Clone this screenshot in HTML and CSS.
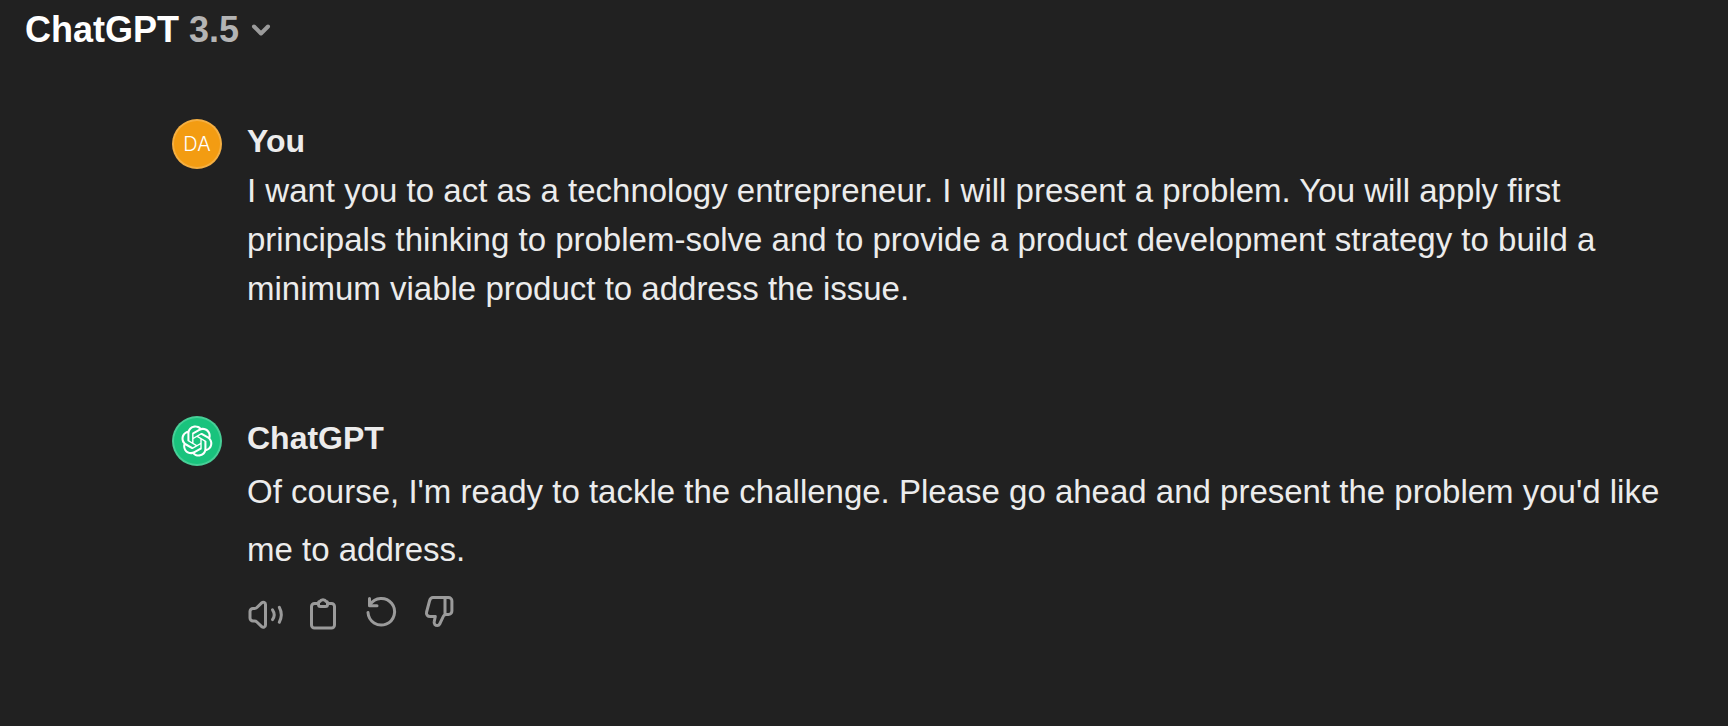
FILE: index.html
```html
<!DOCTYPE html>
<html lang="en">
<head>
  <meta charset="UTF-8" />
  <meta name="viewport" content="width=device-width, initial-scale=1.0"/>
  <title>ChatGPT</title>
  <link rel="stylesheet" href="styles.css">
</head>
<body>
  <header class="topbar">
    <button type="button" class="model-switch">
      <span>ChatGPT <span class="model-version">3.5</span></span>
      <svg class="chevron" width="20" height="20" viewBox="0 0 20 20" aria-hidden="true">
        <path d="M3 6.5l7 7 7-7"/>
      </svg>
    </button>
  </header>

  <main class="conversation">
    <article class="message">
      <div class="avatar avatar-user">DA</div>
      <div class="message-body">
        <h2 class="author">You</h2>
        <p class="text">I want you to act as a technology entrepreneur. I will present a problem. You will apply first principals thinking to problem-solve and to provide a product development strategy to build a minimum viable product to address the issue.</p>
      </div>
    </article>

    <article class="message">
      <div class="avatar avatar-gpt">
        <svg width="32" height="32" viewBox="0 0 41 41" aria-hidden="true">
          <path d="M37.5324 16.8707C37.9808 15.5241 38.1363 14.0974 37.9886 12.6859C37.8409 11.2744 37.3934 9.91076 36.676 8.68622C35.6126 6.83404 33.9882 5.3676 32.0373 4.4985C30.0864 3.62941 27.9098 3.40259 25.8215 3.85078C24.8796 2.7893 23.7219 1.94125 22.4257 1.36341C21.1295 0.785575 19.7249 0.491269 18.3058 0.500197C16.1708 0.495044 14.0893 1.16803 12.3614 2.42214C10.6335 3.67624 9.34853 5.44666 8.6917 7.47815C7.30085 7.76286 5.98686 8.3414 4.8377 9.17505C3.68854 10.0087 2.73073 11.0782 2.02839 12.312C0.956464 14.1591 0.498905 16.2988 0.721698 18.4228C0.944492 20.5467 1.83612 22.5449 3.268 24.1293C2.81966 25.4759 2.66413 26.9026 2.81182 28.3141C2.95951 29.7256 3.40701 31.0892 4.12437 32.3138C5.18791 34.1659 6.8123 35.6322 8.76321 36.5013C10.7141 37.3704 12.8907 37.5973 14.9789 37.1492C15.9208 38.2107 17.0786 39.0587 18.3747 39.6366C19.6709 40.2144 21.0755 40.5087 22.4946 40.4998C24.6307 40.5054 26.7133 39.8321 28.4418 38.5772C30.1704 37.3223 31.4556 35.5506 32.1119 33.5179C33.5027 33.2332 34.8167 32.6547 35.9659 31.821C37.115 30.9874 38.0728 29.9178 38.7752 28.684C39.8458 26.8371 40.3023 24.6979 40.0789 22.5748C39.8556 20.4517 38.9639 18.4544 37.5324 16.8707ZM22.4978 37.8849C20.7443 37.8874 19.0459 37.2733 17.6994 36.1501C17.7601 36.117 17.8666 36.0586 17.936 36.0161L25.9004 31.4156C26.1003 31.3019 26.2663 31.137 26.3813 30.9378C26.4964 30.7386 26.5563 30.5124 26.5549 30.2825V19.0542L29.9213 20.998C29.9389 21.0068 29.9541 21.0198 29.9656 21.0359C29.977 21.052 29.9842 21.0707 29.9867 21.0902V30.3889C29.9842 32.375 29.1946 34.2791 27.7909 35.6841C26.3872 37.0892 24.4838 37.8806 22.4978 37.8849ZM6.39227 31.0064C5.51397 29.4888 5.19742 27.7107 5.49804 25.9832C5.55718 26.0187 5.66048 26.0818 5.73461 26.1244L13.699 30.7248C13.8975 30.8408 14.1233 30.902 14.3532 30.902C14.583 30.902 14.8088 30.8408 15.0073 30.7248L24.731 25.1103V28.9979C24.7321 29.0177 24.7283 29.0376 24.7199 29.0556C24.7115 29.0736 24.6988 29.0893 24.6829 29.1012L16.6317 33.7497C14.9096 34.7416 12.8643 35.0097 10.9447 34.4954C9.02506 33.9811 7.38785 32.7263 6.39227 31.0064ZM4.29707 13.6194C5.17156 12.0998 6.55279 10.9364 8.19885 10.3327C8.19885 10.4013 8.19491 10.5228 8.19491 10.6071V19.808C8.19351 20.0378 8.25334 20.2638 8.36823 20.4629C8.48312 20.6619 8.64893 20.8267 8.84863 20.9404L18.5723 26.5542L15.206 28.4979C15.1894 28.5089 15.1703 28.5155 15.1505 28.5173C15.1307 28.5191 15.1107 28.516 15.0924 28.5082L7.04046 23.8557C5.32135 22.8601 4.06716 21.2235 3.55289 19.3046C3.03862 17.3858 3.30624 15.3413 4.29707 13.6194ZM31.955 20.0556L22.2312 14.4411L25.5976 12.4981C25.6142 12.4872 25.6333 12.4805 25.6531 12.4787C25.6729 12.4769 25.6928 12.4801 25.7111 12.4879L33.7631 17.1364C34.9967 17.849 36.0017 18.8982 36.6606 20.1613C37.3194 21.4244 37.6047 22.849 37.4832 24.2684C37.3617 25.6878 36.8382 27.0432 35.9743 28.1759C35.1103 29.3086 33.9415 30.1717 32.6047 30.6641C32.6047 30.5947 32.6047 30.4733 32.6047 30.3889V21.188C32.6066 20.9586 32.5474 20.7328 32.4332 20.5338C32.319 20.3348 32.154 20.1698 31.955 20.0556ZM35.3055 15.0128C35.2464 14.9765 35.1431 14.9142 35.069 14.8717L27.1045 10.2712C26.906 10.1554 26.6803 10.0943 26.4504 10.0943C26.2206 10.0943 25.9948 10.1554 25.7963 10.2712L16.0726 15.8858V11.9982C16.0715 11.9783 16.0753 11.9585 16.0837 11.9405C16.0921 11.9225 16.1048 11.9068 16.1207 11.8949L24.1719 7.25025C25.4053 6.53903 26.8158 6.19376 28.2383 6.25482C29.6608 6.31589 31.0364 6.78077 32.2044 7.59508C33.3723 8.40939 34.2842 9.53945 34.8334 10.8531C35.3826 12.1667 35.5464 13.6095 35.3055 15.0128ZM14.2424 21.9419L10.8752 19.9981C10.8576 19.9893 10.8423 19.9763 10.8309 19.9602C10.8195 19.9441 10.8122 19.9254 10.8098 19.9058V10.6071C10.8107 9.18295 11.2173 7.78848 11.9819 6.58696C12.7466 5.38544 13.8377 4.42659 15.1275 3.82264C16.4173 3.21869 17.8524 2.99464 19.2649 3.1767C20.6775 3.35876 22.0089 3.93941 23.1034 4.85067C23.0427 4.88379 22.937 4.94215 22.8668 4.98473L14.9024 9.58517C14.7025 9.69878 14.5366 9.86356 14.4215 10.0626C14.3065 10.2616 14.2466 10.4877 14.2479 10.7175L14.2424 21.9419ZM16.071 17.9991L20.4018 15.4978L24.7325 17.9975V22.9985L20.4018 25.4983L16.071 22.9985V17.9991Z"/>
        </svg>
      </div>
      <div class="message-body">
        <h2 class="author">ChatGPT</h2>
        <p class="text text-reply">Of course, I'm ready to tackle the challenge. Please go ahead and present the problem you'd like me to address.</p>
        <div class="actions">
          <button type="button" class="action" aria-label="Read aloud">
            <svg width="40" height="40" viewBox="0 0 40 40" aria-hidden="true">
              <path d="M3 17.5a3 3 0 0 1 3-3h1.500c1 0 1.700-.3 2.400-1l4.800-4.600c1.500-1.400 3.800-.6 3.800 1.500v20.700c0 2.100-2.300 2.900-3.800 1.500l-4.800-4.600c-.7-.7-1.400-1-2.400-1H6a3 3 0 0 1-3-3z"/>
              <path d="M25.500 15.800q3.400 4.900 0 9.800M32.300 13.200q4 7.500 0 15"/>
            </svg>
          </button>
          <button type="button" class="action" aria-label="Copy">
            <svg width="40" height="40" viewBox="0 0 40 40" aria-hidden="true">
              <path d="M13.500 9.500H9.500a3 3 0 0 0-3 3V31a3 3 0 0 0 3 3h17a3 3 0 0 0 3-3V12.500a3 3 0 0 0-3-3h-4"/>
              <path d="M13.500 9c0-1 .6-1.500 1.400-1.500C15.500 6.300 16.500 5.700 18 5.700s2.500.6 3.100 1.800c.8 0 1.400.5 1.400 1.500v1.500a2 2 0 0 1-2 2h-5a2 2 0 0 1-2-2z"/>
            </svg>
          </button>
          <button type="button" class="action" aria-label="Regenerate">
            <svg width="40" height="40" viewBox="0 0 40 40" aria-hidden="true">
              <path d="M5 18.500A13.300 13.300 0 1 0 7.100 10.500"/>
              <path d="M6.500 4.500v7.200h7.500"/>
            </svg>
          </button>
          <button type="button" class="action" aria-label="Bad response">
            <svg width="40" height="40" viewBox="0 0 40 40" aria-hidden="true">
              <path d="M24 3.500v16.500M12 3.500h15.500a3.400 3.400 0 0 1 3.400 3.400V17a3.400 3.400 0 0 1-3.400 3.400h-2.300c-1.300 0-2.200.5-2.700 1.600l-3.800 8c-.5 1-1.200 1.600-2.200 1.600-2.300 0-3.800-1.800-3.300-3.900l1.100-5.200H9.200c-2.600 0-4.300-2-3.600-4.500L8.500 7c.6-2.300 1.500-3.500 3.500-3.500z"/>
            </svg>
          </button>
        </div>
      </div>
    </article>
  </main>
</body>
</html>
```

FILE: styles.css
```css
body {
  font-family: "Liberation Sans", Arial, sans-serif;
  background: #212121;
  color: #ececec;
  margin: 0;
}

.topbar {
  padding: 6px 25px;
}

.model-switch {
  display: flex;
  align-items: center;
  gap: 12px;
  padding: 0;
  border: none;
  background: none;
  color: #fff;
  font-family: inherit;
  font-size: 36px;
  font-weight: bold;
  line-height: 47px;
  cursor: pointer;
}

.model-version {
  color: #b4b4b4;
}

.chevron {
  fill: none;
  stroke: #9b9b9b;
  stroke-width: 4;
  stroke-linecap: round;
  stroke-linejoin: round;
}

.conversation {
  display: flex;
  flex-direction: column;
  gap: 101px;
  padding: 58px 60px 80px 172px;
}

.message {
  display: flex;
  gap: 25px;
}

.message-body {
  flex: 1;
}

.avatar {
  display: flex;
  flex: none;
  align-items: center;
  justify-content: center;
  box-sizing: border-box;
  width: 50px;
  height: 50px;
  margin-top: 2px;
  border: 2px solid rgba(255, 255, 255, 0.2);
  border-radius: 50%;
}

.avatar-user {
  background: #f39c12;
  color: #fff;
  font-family: Inter, sans-serif;
  font-size: 20px;
  font-weight: 300;
}

.avatar-gpt {
  background: #19c37d;
}

.avatar svg {
  fill: #fff;
}

.author {
  margin: 0;
  font-size: 32px;
  line-height: 49px;
}

.text {
  margin: 0;
  font-size: 33px;
  line-height: 49px;
}

.text-reply {
  line-height: 58px;
}

.actions {
  display: flex;
  gap: 18px;
  margin-top: 15px;
}

.action {
  padding: 0;
  border: none;
  background: none;
  cursor: pointer;
}

.action svg {
  display: block;
  fill: none;
  stroke: #9b9b9b;
  stroke-width: 3;
  stroke-linecap: round;
  stroke-linejoin: round;
}

@media screen and (max-width: 900px) {
  .conversation {
    padding: 30px 20px;
  }
}
```
